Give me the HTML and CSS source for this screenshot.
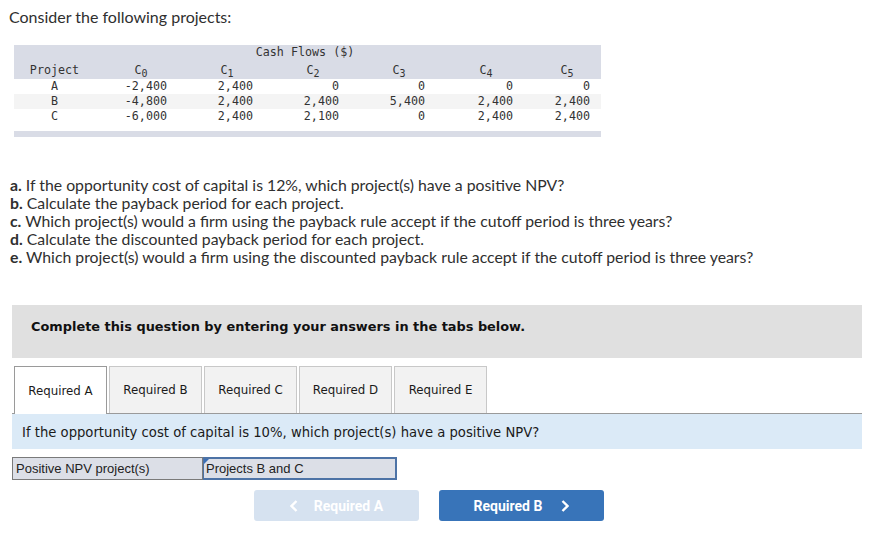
FILE: index.html
```html
<!DOCTYPE html>
<html>
<head>
<meta charset="utf-8">
<link rel="stylesheet" href="styles.css">
</head>
<body>
<p class="title">Consider the following projects:</p>

<div class="cf">
  <div class="cf-head">
    <div class="cf-row">
      <div></div><div></div>
      <div class="cf-caption">Cash Flows ($)</div>
    </div>
    <div class="cf-row cf-sub">
      <div class="c-proj">Project</div>
      <div class="c-h">C<sub>0</sub></div>
      <div class="c-h">C<sub>1</sub></div>
      <div class="c-h">C<sub>2</sub></div>
      <div class="c-h">C<sub>3</sub></div>
      <div class="c-h">C<sub>4</sub></div>
      <div class="c-h">C<sub>5</sub></div>
    </div>
  </div>
  <div class="cf-row cf-data">
    <div class="c-proj">A</div><div class="c-v">-2,400</div><div class="c-v">2,400</div><div class="c-v">0</div><div class="c-v">0</div><div class="c-v">0</div><div class="c-v c-last">0</div>
  </div>
  <div class="cf-row cf-data cf-alt">
    <div class="c-proj">B</div><div class="c-v">-4,800</div><div class="c-v">2,400</div><div class="c-v">2,400</div><div class="c-v">5,400</div><div class="c-v">2,400</div><div class="c-v c-last">2,400</div>
  </div>
  <div class="cf-row cf-data">
    <div class="c-proj">C</div><div class="c-v">-6,000</div><div class="c-v">2,400</div><div class="c-v">2,100</div><div class="c-v">0</div><div class="c-v">2,400</div><div class="c-v c-last">2,400</div>
  </div>
  <div class="cf-gap"></div>
  <div class="cf-foot"></div>
</div>

<div class="questions">
  <p><b>a.</b> If the opportunity cost of capital is 12%, which project(s) have a positive NPV?</p>
  <p><b>b.</b> Calculate the payback period for each project.</p>
  <p><b>c.</b> Which project(s) would a firm using the payback rule accept if the cutoff period is three years?</p>
  <p><b>d.</b> Calculate the discounted payback period for each project.</p>
  <p><b>e.</b> Which project(s) would a firm using the discounted payback rule accept if the cutoff period is three years?</p>
</div>

<div class="instr">Complete this question by entering your answers in the tabs below.</div>

<div class="tabs">
  <div class="tab active">Required A</div>
  <div class="tab">Required B</div>
  <div class="tab">Required C</div>
  <div class="tab">Required D</div>
  <div class="tab">Required E</div>
</div>
<div class="prompt">If the opportunity cost of capital is 10%, which project(s) have a positive NPV?</div>

<div class="answer">
  <div class="ans-label">Positive NPV project(s)</div>
  <div class="ans-input">Projects B and C</div>
</div>

<div class="nav">
  <div class="btn btn-prev">
    <svg class="chev" width="8" height="12" viewBox="0 0 8 12"><polyline points="6.5,1 1.5,6 6.5,11" fill="none" stroke="#fff" stroke-width="2.4"/></svg>
    <span>Required A</span>
  </div>
  <div class="btn btn-next">
    <span>Required B</span>
    <svg class="chev" width="8" height="12" viewBox="0 0 8 12"><polyline points="1.5,1 6.5,6 1.5,11" fill="none" stroke="#fff" stroke-width="2.4"/></svg>
  </div>
</div>
</body>
</html>
```

FILE: styles.css
```css
body {
  margin: 0;
  font-family: Lato, sans-serif;
  color: #2f2f2f;
  background: #fff;
}
p { margin: 0; }

.title {
  font-size: 16px;
  line-height: 18px;
  padding: 8px 0 0 9px;
}

.cf {
  margin: 19px 0 0 14px;
  width: 587px;
  font-family: "DejaVu Sans Mono", "Liberation Mono", monospace;
  font-size: 11.7px;
  color: #333;
}
.cf-head {
  background: #d9dce6;
  height: 34px;
}
.cf-row {
  display: grid;
  grid-template-columns: 81px 86px 86px 86px 86px 88px 74px;
  line-height: 14px;
}
.cf-caption {
  grid-column: 3 / 6;
  text-align: center;
  padding-right: 10px;
}
.cf-sub { padding-top: 4px; }
.c-proj { text-align: center; }
.c-h { text-align: center; padding-left: 6px; }
.c-h sub {
  font-size: 10px;
  line-height: 0;
  vertical-align: -3px;
}
.cf-data { line-height: 15px; }
.c-v { text-align: right; padding-right: 14px; }
.c-last { padding-right: 11px; }
.cf-alt { background: #f4f4f4; }
.cf-gap { height: 7px; }
.cf-foot { height: 6px; background: #d9dce6; }

.questions {
  margin-top: 39px;
  padding-left: 10px;
  font-size: 15.8px;
  line-height: 18px;
}
.questions b { font-weight: 700; }

.instr {
  margin: 39px 0 0 12px;
  width: 850px;
  height: 53px;
  box-sizing: border-box;
  padding: 14px 0 0 19px;
  background: #e0e0e0;
  font-family: "DejaVu Sans", Verdana, sans-serif;
  font-weight: bold;
  font-size: 12.9px;
  line-height: 16px;
  color: #111;
}

.tabs {
  margin: 8px 0 0 12px;
  width: 850px;
  padding-left: 2px;
  box-sizing: border-box;
  display: flex;
  gap: 2px;
  border-bottom: 1px solid #9a9a9a;
  height: 48px;
}
.tab {
  width: 93px;
  height: 47px;
  box-sizing: border-box;
  border: 1px solid #c8c8c8;
  border-bottom: none;
  background: #f2f2f2;
  display: flex;
  align-items: center;
  justify-content: center;
  font-family: "DejaVu Sans", Verdana, sans-serif;
  font-size: 11.8px;
  color: #1a1a1a;
}
.tab.active {
  background: #fff;
  border-color: #9a9a9a;
  height: 48px;
}

.prompt {
  margin-left: 12px;
  width: 850px;
  height: 35px;
  box-sizing: border-box;
  padding: 10px 0 0 10px;
  background: #dbeaf7;
  font-family: "DejaVu Sans", Verdana, sans-serif;
  font-size: 13.2px;
  line-height: 17px;
  color: #1a1a1a;
}

.answer {
  margin: 8px 0 0 12px;
  display: flex;
  height: 23px;
  font-family: "Liberation Sans", Arial, sans-serif;
  font-size: 13px;
  color: #222;
}
.ans-label {
  width: 191px;
  box-sizing: border-box;
  border: 1px solid #7a7a7a;
  background: #dcdfe7;
  padding: 2px 0 0 3px;
  line-height: 17px;
}
.ans-input {
  position: relative;
  width: 194px;
  box-sizing: border-box;
  border: 2px solid #4d73a6;
  border-left-width: 1px;
  background: #dcdfe7;
  padding: 1px 0 0 2px;
  line-height: 17px;
}
.ans-input::before {
  content: "";
  position: absolute;
  left: 0;
  top: 0;
  border-top: 5px solid #3b6fb6;
  border-right: 5px solid transparent;
}

.nav {
  margin: 10px 0 0 254px;
  display: flex;
  gap: 20px;
}
.btn {
  width: 165px;
  height: 31px;
  border-radius: 3px;
  display: flex;
  align-items: center;
  justify-content: center;
  font-family: Roboto, "Liberation Sans", sans-serif;
  font-weight: bold;
  font-size: 14px;
  color: #fff;
}
.btn-prev { background: #d6e2f0; gap: 16px; }
.btn-next { background: #3874b9; gap: 19px; }
.chev { display: block; }
```
